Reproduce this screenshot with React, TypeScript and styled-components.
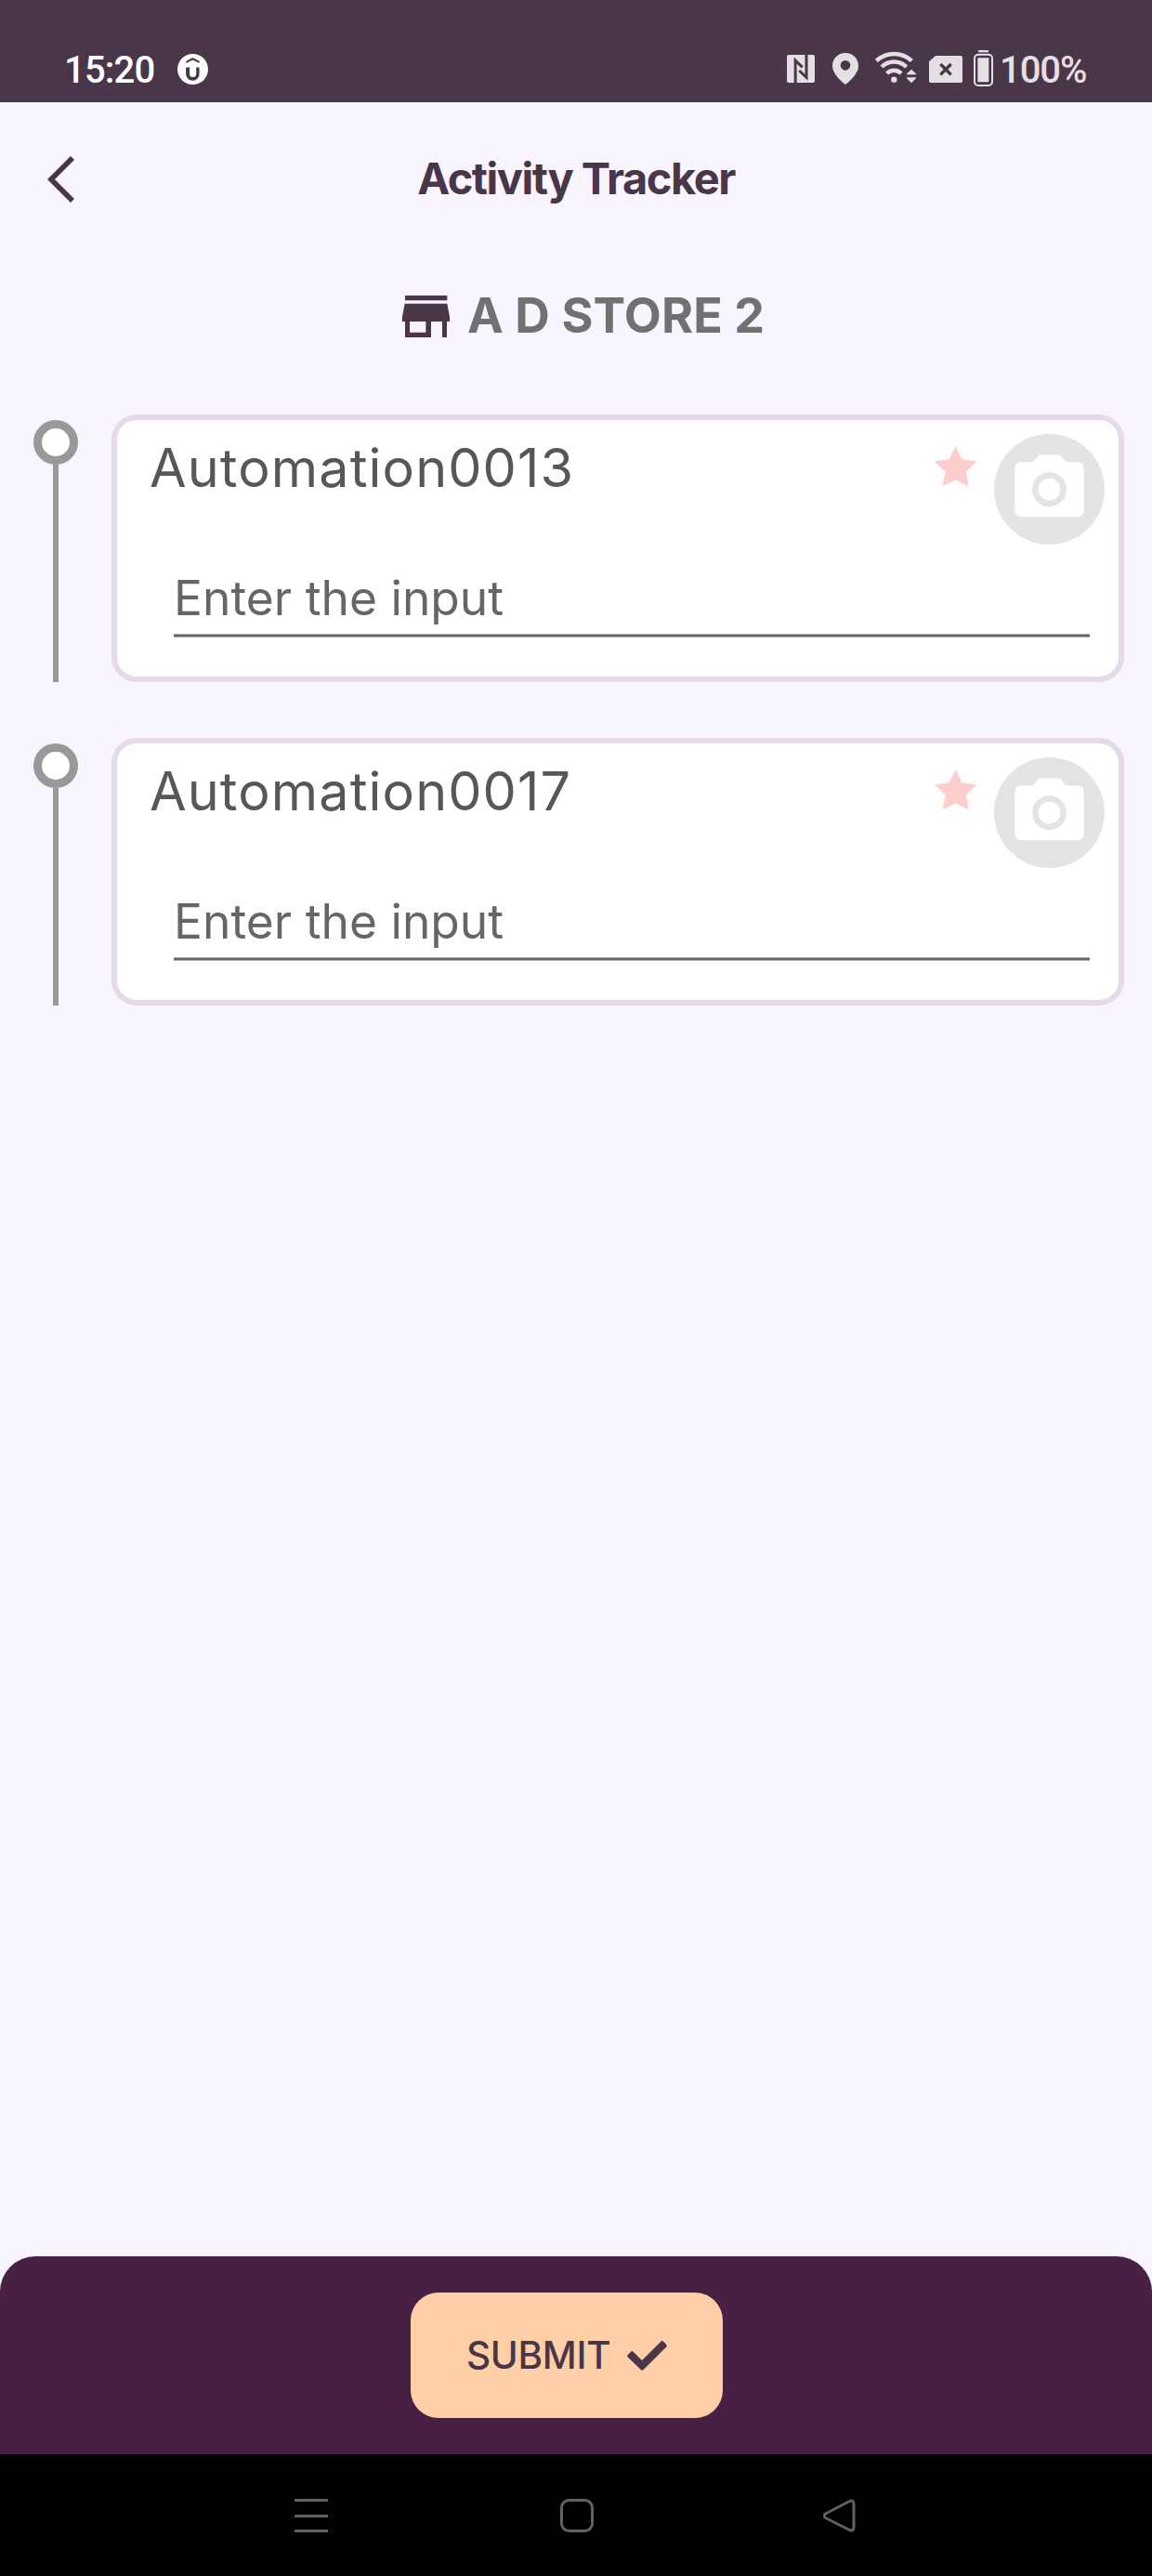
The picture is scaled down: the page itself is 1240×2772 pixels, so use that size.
import React from "react";
import styled, { createGlobalStyle } from "styled-components";

const colors = {
  plum: "#4a3649",
  deepPlum: "#482044",
  page: "#f8f5ff",
  cardBorder: "#e6dae8",
  grey: "#999999",
  peach: "#ffcfa8",
  status: "#e3dfe3",
  nav: "#616161",
};

const GlobalStyle = createGlobalStyle`
  body {
    margin: 0;
    background: ${colors.page};
    font-family: Inter, Lato, sans-serif;
    font-variant-ligatures: none;
  }
  svg { display: block; flex: none; }
`;

const Screen = styled.div`
  display: flex;
  flex-direction: column;
  width: 1240px;
  height: 2772px;
  background: ${colors.page};
`;

const StatusBar = styled.header`
  box-sizing: border-box;
  display: flex;
  align-items: center;
  justify-content: space-between;
  height: 110px;
  padding: 38px 72px 0 69px;
  background: ${colors.plum};
  font-family: Roboto, sans-serif;
  font-weight: 500;
`;

const StatusGroup = styled.div`
  display: flex;
  align-items: center;
`;

const StatusText = styled.span<{ $color: string; $width: number; $spacing: number }>`
  width: ${(p) => p.$width}px;
  padding-top: 3px;
  font-size: 40px;
  line-height: 46px;
  letter-spacing: ${(p) => p.$spacing}px;
  color: ${(p) => p.$color};
  white-space: nowrap;
`;

const StatusIcon = styled.svg<{ $gap: number }>`
  height: 40px;
  margin-right: ${(p) => p.$gap}px;
`;

const TitleBar = styled.div`
  display: grid;
  grid-template-columns: 1fr auto 1fr;
  align-items: center;
  height: 166px;
`;

const BackButton = styled.button`
  justify-self: start;
  border: 0;
  padding: 0 0 0 50px;
  background: none;
`;

const Title = styled.h1`
  margin: 0;
  padding-bottom: 2px;
  font-size: 47px;
  line-height: 60px;
  font-weight: 700;
  letter-spacing: -1.5px;
  color: ${colors.plum};
`;

const StoreRow = styled.div`
  display: flex;
  align-items: center;
  gap: 19px;
  height: 128px;
  padding-left: 433px;
`;

const StoreName = styled.h2`
  margin: 0;
  font-size: 52px;
  line-height: 64px;
  font-weight: 700;
  letter-spacing: 0.1px;
  color: #717171;
`;

const ActivityList = styled.main`
  display: flex;
  flex: 1;
  flex-direction: column;
  gap: 60px;
  padding: 42px 30px 0 36px;
`;

const ActivityRow = styled.section`
  display: flex;
  gap: 36px;
  height: 288px;
`;

const Timeline = styled.div`
  display: flex;
  flex-direction: column;
  align-items: center;
  width: 48px;
  padding-top: 6px;
`;

const TimelineDot = styled.div`
  box-sizing: border-box;
  width: 48px;
  height: 48px;
  border: 9px solid ${colors.grey};
  border-radius: 50%;
  background: #fff;
`;

const TimelineLine = styled.div`
  flex: 1;
  width: 6px;
  background: ${colors.grey};
`;

const Card = styled.div`
  box-sizing: border-box;
  flex: 1;
  border: 6px solid ${colors.cardBorder};
  border-radius: 27px;
  padding: 15px 15px 0 35px;
  background: #fff;
`;

const CardHead = styled.div`
  display: flex;
  align-items: flex-start;
  height: 119px;
`;

const CardTitle = styled.h3`
  flex: 1;
  margin: 4px 0 0;
  font-size: 57.5px;
  line-height: 64px;
  font-weight: 400;
  letter-spacing: 1.1px;
  color: #575757;
`;

const Star = styled.svg`
  width: 45.4px;
  height: 43.4px;
  margin: 13px 19px 0 0;
`;

const Field = styled.div`
  margin: 25px 16px 0 26px;
  padding-bottom: 8px;
  border-bottom: 2px solid #666;
  box-shadow: 0 1px #a9a9a9, inset 0 -1px #a9a9a9;
  font-size: 51.5px;
  line-height: 64px;
  color: #666;
`;

const Footer = styled.footer`
  box-sizing: border-box;
  display: flex;
  justify-content: center;
  align-items: center;
  height: 213px;
  padding-right: 20px;
  border-radius: 38px 38px 0 0;
  background: ${colors.deepPlum};
`;

const SubmitButton = styled.button`
  box-sizing: border-box;
  display: flex;
  align-items: center;
  width: 336px;
  height: 135px;
  border: 0;
  border-radius: 30px;
  padding: 0 0 0 60px;
  background: ${colors.peach};
  color: ${colors.plum};
  font-family: inherit;
  font-size: 40.5px;
  font-weight: 500;
  letter-spacing: -0.3px;
`;

const SubmitLabel = styled.span`
  width: 173px;
  text-align: left;
`;

const SystemNav = styled.nav`
  display: flex;
  align-items: center;
  height: 131px;
  padding-left: 317px;
  background: #000;
`;

const NavIcon = styled.svg<{ $gap: number }>`
  width: 36px;
  height: 38px;
  margin-right: ${(p) => p.$gap}px;
  fill: none;
  stroke: ${colors.nav};
  stroke-width: 3;
`;

function StatusIcons() {
  const c = colors.status;
  return (
    <>
      <StatusIcon $gap={19} width={30} viewBox="81 72 90 120">
        <rect x="81" y="87" width="90" height="90" rx="6" fill={c} />
        <path d="M108.500 178V105L131 127" fill="none" stroke={colors.plum} strokeWidth="9" />
        <path d="M144 86V160L121 138" fill="none" stroke={colors.plum} strokeWidth="9" />
      </StatusIcon>
      <StatusIcon $gap={18} width={28} viewBox="228 72 84 120">
        <path
          fill={c}
          fillRule="evenodd"
          d="M270 81C246 81 228 99 228 123C228 153 270 183 270 183S312 153 312 123C312 99 294 81 270 81ZM270 105A16 16 0 1 1 270 137A16 16 0 1 1 270 105Z"
        />
      </StatusIcon>
      <StatusIcon $gap={14} width={44} viewBox="366 72 132 120">
        <circle cx="427" cy="167" r="9.500" fill={c} />
        <path
          d="M370 106A84 84 0 0 1 484 106M387 126A57 57 0 0 1 467 126M404 147A32 32 0 0 1 450 147"
          fill="none"
          stroke={c}
          strokeWidth="13.500"
        />
        <path fill={c} d="M483 134L498 148V151H468V148ZM468 160H498V163L483 178L468 163Z" />
      </StatusIcon>
      <StatusIcon $gap={12} width={36} viewBox="540 72 108 120">
        <path fill={c} d="M561 90H642Q648 90 648 96V171Q648 177 642 177H546Q540 177 540 171V109Z" />
        <path d="M577 117L611 151M611 117L577 151" stroke={colors.plum} strokeWidth="10" />
      </StatusIcon>
      <StatusIcon $gap={7} width={21} viewBox="684 72 63 120">
        <rect x="699" y="72" width="33" height="7" rx="2" fill={c} />
        <rect x="687" y="86" width="57" height="100" rx="12" fill="none" stroke={c} strokeWidth="6" />
        <rect x="697" y="97" width="36" height="78" rx="3" fill={c} />
      </StatusIcon>
    </>
  );
}

function ClockBadge() {
  return (
    <svg width={33} height={33} viewBox="393 24 98 98">
      <circle cx="442" cy="73" r="49" fill="#fff" />
      <path d="M421 54V47L442 36L463 47V54L442 43Z" fill={colors.plum} />
      <path
        d="M420 67H432V88A10.500 10.500 0 0 0 453 88V67H463V88A21 21 0 0 1 420 88Z"
        fill={colors.plum}
      />
    </svg>
  );
}

function StoreIcon() {
  return (
    <svg width={51} height={45} viewBox="99 534 153 135" fill={colors.plum}>
      <path
        d="M108 534H244V550H108ZM107 560H244L252 602V618H243V669H228V618H192V669H108V618H99V602ZM123 618V653H175V618Z"
        fillRule="evenodd"
      />
    </svg>
  );
}

function CameraIcon() {
  return (
    <svg width={119} height={119} viewBox="510 140.500 357 357">
      <circle cx="688.500" cy="319" r="178.500" fill="#e4e4e4" />
      <path
        fill="#fff"
        fillRule="evenodd"
        d="M655 208H722L743 231H778Q800 231 800 253V386Q800 408 778 408H599Q577 408 577 386V253Q577 231 599 231H635ZM688.500 264A55.500 55.500 0 1 0 688.500 375A55.500 55.500 0 1 0 688.500 264Z"
      />
      <circle cx="688.500" cy="319.500" r="35.500" fill="#fff" />
    </svg>
  );
}

function Activity({ name }: { name: string }) {
  return (
    <ActivityRow>
      <Timeline>
        <TimelineDot />
        <TimelineLine />
      </Timeline>
      <Card>
        <CardHead>
          <CardTitle>{name}</CardTitle>
          <Star viewBox="316 181 136 130">
            <path
              fill="#fccfce"
              d="M384 181L405 224L452 230L418 264L426 311L384 290L342 311L350 264L316 230L363 224Z"
            />
          </Star>
          <CameraIcon />
        </CardHead>
        <Field>Enter the input</Field>
      </Card>
    </ActivityRow>
  );
}

export default function App() {
  return (
    <Screen>
      <GlobalStyle />
      <StatusBar>
        <StatusGroup>
          <StatusText $color="#fff" $width={122} $spacing={-0.8}>15:20</StatusText>
          <ClockBadge />
        </StatusGroup>
        <StatusGroup>
          <StatusIcons />
          <StatusText $color={colors.status} $width={92} $spacing={-1.1}>100%</StatusText>
        </StatusGroup>
      </StatusBar>

      <TitleBar>
        <BackButton aria-label="Back">
          <svg width={31} height={50} viewBox="150 504 93 150">
            <path d="M234 510L165 579L234 648" fill="none" stroke={colors.plum} strokeWidth="17" />
          </svg>
        </BackButton>
        <Title>Activity Tracker</Title>
      </TitleBar>

      <StoreRow>
        <StoreIcon />
        <StoreName>A D STORE 2</StoreName>
      </StoreRow>

      <ActivityList>
        <Activity name="Automation0013" />
        <Activity name="Automation0017" />
      </ActivityList>

      <Footer>
        <SubmitButton>
          <SubmitLabel>SUBMIT</SubmitLabel>
          <svg width={43} height={32} viewBox="765 293 129 97">
            <path
              d="M783 327L813 357L876 294Q879 292 882 294L893 306Q895 309 893 312L817 388Q813 391 810 388L766 345Q764 342 766 339L777 328Q780 325 783 327Z"
              fill={colors.plum}
            />
          </svg>
        </SubmitButton>
      </Footer>

      <SystemNav>
        <NavIcon $gap={250} viewBox="0 0 36 38">
          <path d="M0 2.500H36M0 19.500H36M0 35.500H36" />
        </NavIcon>
        <NavIcon $gap={247} viewBox="0 0 36 38">
          <rect x="1.500" y="2.500" width="33" height="33" rx="8" />
        </NavIcon>
        <NavIcon $gap={0} viewBox="0 0 36 38">
          <path
            strokeLinejoin="round"
            d="M2.500 17L28.500 3.500Q32.500 2 33 6V32Q32.500 36 28.500 34.500L2.500 21.500Q-.5 19.500 2.500 17Z"
          />
        </NavIcon>
      </SystemNav>
    </Screen>
  );
}
